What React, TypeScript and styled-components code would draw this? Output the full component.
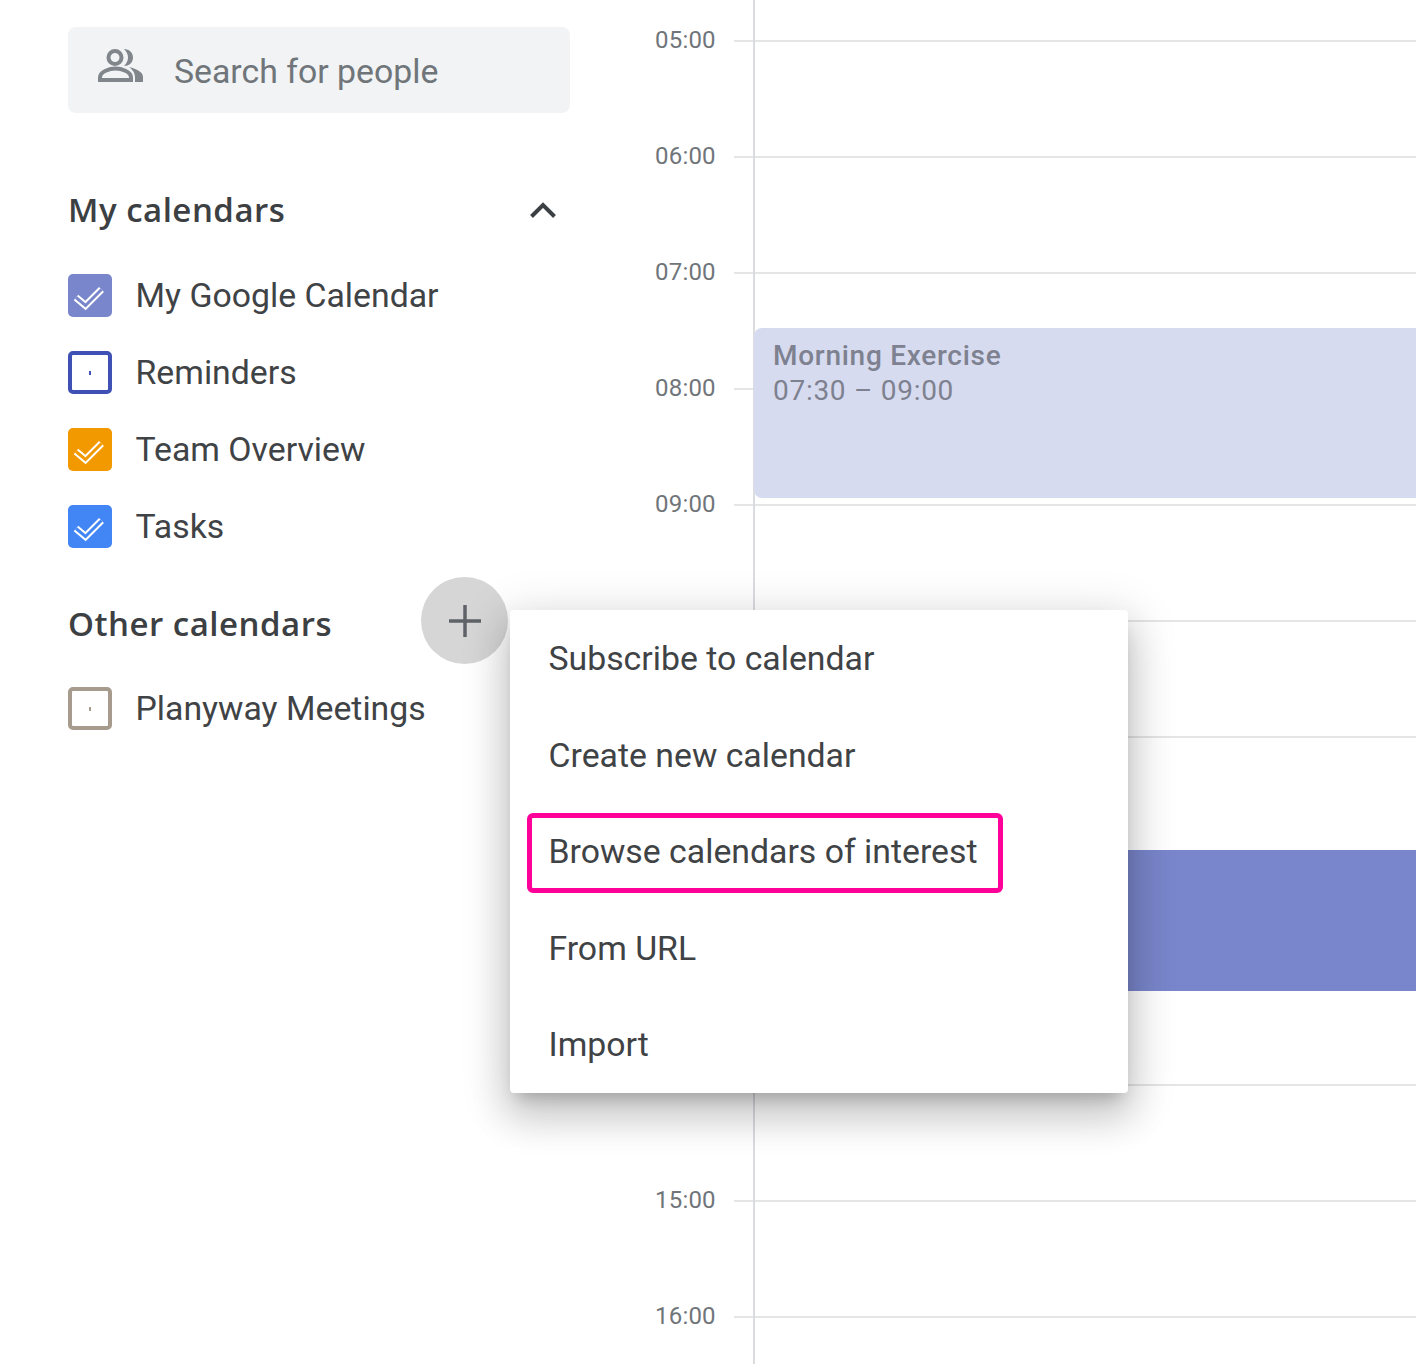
import React from "react";
import styled, { createGlobalStyle } from "styled-components";

const Global = createGlobalStyle`
  html, body { margin: 0; padding: 0; background: #fff; }
  body { font-family: Roboto, "Liberation Sans", sans-serif; color: #3c4043; }
  #root { width: 1416px; height: 1364px; overflow: hidden; }
`;

const Page = styled.div`
  position: relative;
  display: flex;
  width: 1416px;
  height: 1364px;
  overflow: hidden;
  background: #fff;
`;

const Sidebar = styled.aside`
  width: 655px;
  flex: none;
  box-sizing: border-box;
  padding: 27px 0 0 68px;
`;

const SearchBox = styled.div`
  display: flex;
  align-items: center;
  gap: 30px;
  box-sizing: border-box;
  width: 502px;
  height: 86px;
  padding: 2px 0 0 30px;
  background: #f1f3f4;
  border-radius: 8px;
  font-size: 33.8px;
  color: #70757a;
`;

const PeopleIcon = styled.svg`
  width: 46px;
  height: 33px;
  flex: none;
  margin-top: -12px;
  color: #80868b;
`;

const SectionHead = styled.div<{ $top: number }>`
  position: relative;
  display: flex;
  align-items: center;
  justify-content: space-between;
  width: 490px;
  height: 48px;
  margin-top: ${(p) => p.$top}px;
`;

const SectionTitle = styled.h2`
  margin: -2px 0 0;
  font-family: "Open Sans", sans-serif;
  font-size: 33px;
  font-weight: 550;
  letter-spacing: 0.5px;
  color: #3c4043;
`;

const Chevron = styled.svg`
  width: 28px;
  height: 18px;
  margin-right: 1px;
  color: #3c4043;
`;

const CalList = styled.ul<{ $top: number }>`
  list-style: none;
  margin: ${(p) => p.$top}px 0 0;
  padding: 0;
  display: flex;
  flex-direction: column;
  gap: 34.2px;
`;

const CalRow = styled.li`
  display: flex;
  align-items: center;
  gap: 23.5px;
  height: 43px;
  font-size: 33.8px;
  line-height: 41px;
  color: #3f4346;
`;

const Box = styled.span<{ $color: string; $checked?: boolean }>`
  position: relative;
  display: flex;
  align-items: center;
  justify-content: center;
  box-sizing: border-box;
  width: 44px;
  height: 43px;
  flex: none;
  border-radius: 5px;
  color: ${(p) => p.$color};
  background: ${(p) => (p.$checked ? p.$color : "#fff")};
  border: ${(p) => (p.$checked ? "none" : `4.5px solid ${p.$color}`)};
`;

const BoxDot = styled.span<{ $color: string }>`
  width: 1.5px;
  height: 4px;
  background: ${(p) => p.$color};
`;

const AddButton = styled.button`
  position: absolute;
  right: 50px;
  top: -23px;
  display: flex;
  align-items: center;
  justify-content: center;
  width: 87px;
  height: 87px;
  padding: 0;
  border: none;
  border-radius: 50%;
  background: #d6d6d6;
  color: #5f6368;
`;

const Main = styled.main`
  position: relative;
  flex: 1;
  margin-top: -17px;
`;

const VerticalRule = styled.div`
  position: absolute;
  left: 98px;
  top: 0;
  bottom: 0;
  width: 2px;
  background: #dadce0;
`;

const HourRow = styled.div`
  display: flex;
  align-items: center;
  gap: 19.5px;
  height: 116px;
`;

const HourLabel = styled.span`
  width: 59.5px;
  flex: none;
  font-size: 24px;
  line-height: 28px;
  letter-spacing: 0.2px;
  margin-top: -3px;
  color: #70757a;
  text-align: right;
`;

const HourLine = styled.div`
  flex: 1;
  height: 2px;
  background: #e4e5e7;
`;

const Event = styled.div<{ $top: number; $height: number; $bg: string }>`
  position: absolute;
  left: 99px;
  right: 0;
  top: ${(p) => p.$top}px;
  height: ${(p) => p.$height}px;
  box-sizing: border-box;
  padding: 10px 0 0 19px;
  background: ${(p) => p.$bg};
  border-radius: 8px 0 0 8px;
`;

const EventTitle = styled.div`
  font-size: 28px;
  line-height: 35px;
  font-weight: 500;
  letter-spacing: 0.72px;
  color: #7e818f;
`;

const EventTime = styled.div`
  font-size: 28px;
  line-height: 35px;
  letter-spacing: 0.72px;
  color: #7e818f;
`;

const Menu = styled.div`
  position: absolute;
  left: 510px;
  top: 610px;
  width: 618px;
  height: 483px;
  box-sizing: border-box;
  padding-top: 0.5px;
  display: flex;
  flex-direction: column;
  background: #fff;
  border-radius: 4px;
  box-shadow: 0 24px 38px 3px rgba(0, 0, 0, 0.14), 0 9px 46px 8px rgba(0, 0, 0, 0.12),
    0 11px 15px -7px rgba(0, 0, 0, 0.2);
`;

const MenuItem = styled.div`
  position: relative;
  flex: 1;
  display: flex;
  align-items: center;
  padding-left: 38.5px;
  font-size: 33.8px;
  color: #3f4346;
`;

const Highlight = styled.span`
  position: absolute;
  left: 17px;
  top: 9.4px;
  width: 476px;
  height: 80px;
  box-sizing: border-box;
  border: 5px solid #ff0099;
  border-radius: 6px;
`;

const CheckMark = () => (
  <svg width="44" height="43" viewBox="0 0 44 43" fill="none">
    <path d="M8 23.5 L17.5 31.5 L33.5 15.5" stroke="#fff" strokeWidth="7" />
    <path d="M8 23.5 L17.5 31.5 L33.5 15.5" stroke="currentColor" strokeWidth="3" />
  </svg>
);

const calendars = [
  { name: "My Google Calendar", color: "#7986cb", checked: true },
  { name: "Reminders", color: "#3f51b5", checked: false },
  { name: "Team Overview", color: "#f29900", checked: true },
  { name: "Tasks", color: "#4285f4", checked: true },
];

const hours = ["05:00", "06:00", "07:00", "08:00", "09:00", "10:00", "", "", "", "", "15:00", "16:00"];
const menu = ["Subscribe to calendar", "Create new calendar", "Browse calendars of interest", "From URL", "Import"];

const CalendarBox = ({ color, checked }: { color: string; checked: boolean }) =>
  checked ? (
    <Box $color={color} $checked>
      <CheckMark />
    </Box>
  ) : (
    <Box $color={color}>
      <BoxDot $color={color} />
    </Box>
  );

export default function App() {
  return (
    <Page>
      <Global />
      <Sidebar>
        <SearchBox>
          <PeopleIcon viewBox="0 0 46 33" fill="none">
            <circle cx="17" cy="8.5" r="6.5" stroke="currentColor" strokeWidth="4" />
            <path d="M2 31 V28.5 C2 22.5 12 19.5 17.5 19.5 S33 22.5 33 28.5 V31 Z" stroke="currentColor" strokeWidth="4" />
            <path d="M26 0 C31 0 35 3.5 35 8.5 S31 17 26 17 C29 14 30 11 30 8.5 S29 3 26 0 Z" fill="currentColor" />
            <path d="M31 18 C39 20 45 23 45 28 V33 H37 V28 C37 24 34 20 31 18 Z" fill="currentColor" />
          </PeopleIcon>
          Search for people
        </SearchBox>
        <SectionHead $top={73}>
          <SectionTitle>My calendars</SectionTitle>
          <Chevron viewBox="0 0 28 18" fill="none">
            <path d="M2.5 15.5 L14 4 L25.5 15.5" stroke="currentColor" strokeWidth="4" />
          </Chevron>
        </SectionHead>
        <CalList $top={39.9}>
          {calendars.map((c) => (
            <CalRow key={c.name}>
              <CalendarBox color={c.color} checked={c.checked} />
              {c.name}
            </CalRow>
          ))}
        </CalList>
        <SectionHead $top={52}>
          <SectionTitle>Other calendars</SectionTitle>
          <AddButton aria-label="Add">
            <svg width="36" height="36" viewBox="0 0 36 36" fill="none">
              <path d="M18 2 V34 M2 18 H34" stroke="currentColor" strokeWidth="3.5" />
            </svg>
          </AddButton>
        </SectionHead>
        <CalList $top={39}>
          <CalRow>
            <CalendarBox color="#a79b8e" checked={false} />
            Planyway Meetings
          </CalRow>
        </CalList>
      </Sidebar>
      <Main>
        <VerticalRule />
        {hours.map((h, i) => (
          <HourRow key={i}>
            <HourLabel>{h}</HourLabel>
            <HourLine />
          </HourRow>
        ))}
        <Event $top={345} $height={170} $bg="#d7dbef">
          <EventTitle>Morning Exercise</EventTitle>
          <EventTime>07:30 – 09:00</EventTime>
        </Event>
        <Event $top={867} $height={141} $bg="#7986cb" />
      </Main>
      <Menu>
        {menu.map((m, i) => (
          <MenuItem key={m}>
            {i === 2 && <Highlight />}
            {m}
          </MenuItem>
        ))}
      </Menu>
    </Page>
  );
}
